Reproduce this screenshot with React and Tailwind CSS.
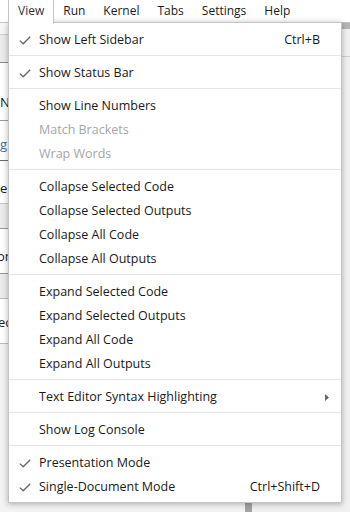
import React from "react";

const Check = () => (
  <svg width="12" height="9" viewBox="0 0 12 9" className="block">
    <polyline points="0.8,4.6 4.2,7.8 11.2,0.8" fill="none" stroke="#666" strokeWidth="1.3" />
  </svg>
);

const Item = ({ label, checked, shortcut, disabled, submenu }) => (
  <div className="flex items-center h-[24px] pt-[2px]">
    <div className="w-[30px] pl-[10px] shrink-0">
      {checked ? <Check /> : null}
    </div>
    <div className={"flex-1 " + (disabled ? "text-[#a6a6a6]" : "text-[#1a1a1a]")}>
      {label}
    </div>
    {shortcut ? <div className="text-[#1a1a1a] pr-[21px]">{shortcut}</div> : null}
    {submenu ? (
      <div className="pr-[12px]">
        <svg width="4" height="7" viewBox="0 0 4 7" className="block">
          <polygon points="0,0 4,3.5 0,7" fill="#666" />
        </svg>
      </div>
    ) : null}
  </div>
);

const Group = ({ children, last }) => (
  <div className={"py-[4px] " + (last ? "" : "border-b border-[#e6e6e6]")}>{children}</div>
);

const sidebarRows = [
  { h: 12, bg: "bg-[#f7f7f7]", b: "border-[#cfcfcf]" },
  { h: 28, bg: "bg-[#ececec]", b: "border-[#8a8a8a]" },
  { h: 58, bg: "bg-white", b: "border-[#9a9a9a]", t: "NO", tt: "pt-[32px]" },
  { h: 40, bg: "bg-white", b: "border-[#6a6a6a]", t: "g", tt: "pt-[16px] text-[#3a6ea5]" },
  { h: 43, bg: "bg-white", b: "border-[#c8c8c8]", t: "e", tt: "pt-[20px]" },
  { h: 25, bg: "bg-[#ececec]", b: "border-[#9a9a9a]" },
  { h: 45, bg: "bg-white", b: "border-[#9a9a9a]", t: "on", tt: "pt-[20px] -ml-[3px]" },
  { h: 25, bg: "bg-[#ececec]", b: "border-[#bdbdbd]" },
  { h: 45, bg: "bg-white", b: "border-[#bdbdbd]", t: "ec", tt: "pt-[16px] -ml-[2px]" },
];

export default function App() {
  return (
    <div className="relative w-[350px] h-[512px] overflow-hidden bg-white font-['Segoe_UI','Open_Sans',sans-serif] text-[12px] text-[#1a1a1a]">
      {/* menubar */}
      <div className="flex h-[23px] border-b border-[#c4c4c4] bg-white pl-[8px] text-[12px] leading-[22px]">
        <div className="px-[9px] border-l border-r border-[#c4c4c4] bg-white h-[24px] text-[#333] relative z-20">View</div>
        <div className="px-[9px]">Run</div>
        <div className="px-[9px]">Kernel</div>
        <div className="px-[9px]">Tabs</div>
        <div className="px-[9px]">Settings</div>
        <div className="px-[9px]">Help</div>
      </div>
      {/* body */}
      <div className="flex h-[489px]">
        <div className="w-[245px] flex flex-col bg-[#f3f3f3]">
          {sidebarRows.map((r, i) => (
            <div key={i} style={{ height: r.h }} className={"border-b overflow-hidden whitespace-nowrap " + r.bg + " " + r.b}>
              {r.t ? <div className={"text-[13px] leading-[14px] " + r.tt}>{r.t}</div> : null}
            </div>
          ))}
        </div>
        <div className="w-[7px] bg-[#a3a3a3]" />
        <div className="flex-1 flex flex-col bg-[#eeeeee]">
          <div className="h-[6px] bg-[#b5b5b5]" />
          <div className="h-[28px] bg-[#f0f0f0] border-b border-[#d0d0d0]" />
          <div className="flex-1 bg-[#f0f0f0]" />
        </div>
      </div>

      {/* dropdown menu */}
      <div className="absolute left-[8px] top-[22px] w-[334px] bg-white border border-[#c4c4c4] shadow-[0_1px_6px_rgba(0,0,0,0.3)] z-10 text-[12.5px] leading-[20px]">
        <Group>
          <Item label="Show Left Sidebar" checked shortcut="Ctrl+B" />
        </Group>
        <Group>
          <Item label="Show Status Bar" checked />
        </Group>
        <Group>
          <Item label="Show Line Numbers" />
          <Item label="Match Brackets" disabled />
          <Item label="Wrap Words" disabled />
        </Group>
        <Group>
          <Item label="Collapse Selected Code" />
          <Item label="Collapse Selected Outputs" />
          <Item label="Collapse All Code" />
          <Item label="Collapse All Outputs" />
        </Group>
        <Group>
          <Item label="Expand Selected Code" />
          <Item label="Expand Selected Outputs" />
          <Item label="Expand All Code" />
          <Item label="Expand All Outputs" />
        </Group>
        <Group>
          <Item label="Text Editor Syntax Highlighting" submenu />
        </Group>
        <Group>
          <Item label="Show Log Console" />
        </Group>
        <Group last>
          <Item label="Presentation Mode" checked />
          <Item label="Single-Document Mode" checked shortcut="Ctrl+Shift+D" />
        </Group>
      </div>
    </div>
  );
}
